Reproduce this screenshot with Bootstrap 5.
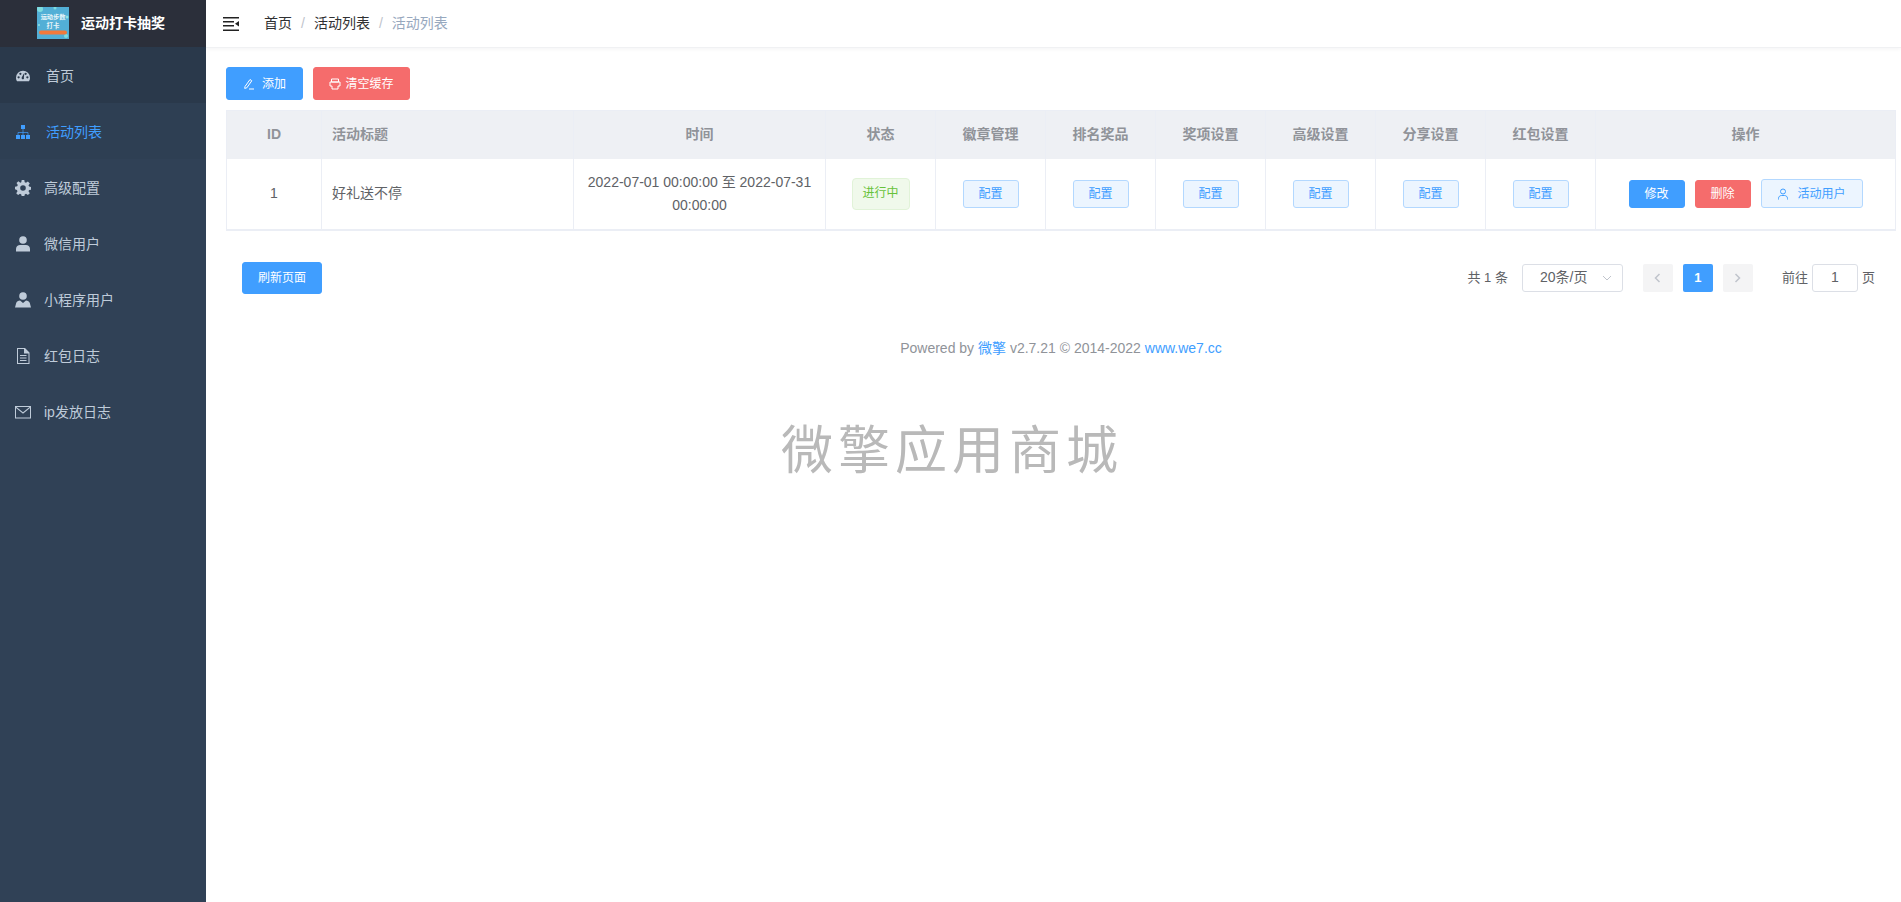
<!DOCTYPE html>
<html lang="zh">
<head>
<meta charset="utf-8">
<title>活动列表</title>
<link href="https://cdn.jsdelivr.net/npm/bootstrap@5.3.0/dist/css/bootstrap.min.css" rel="stylesheet">
<style>
html,body{height:100%}
body{font-family:"Liberation Sans","Noto Sans CJK SC",sans-serif;font-size:14px;color:#606266;background:#fff;overflow:hidden}
.shell{height:902px}
.side{width:206px;flex:none;background:#304156;color:#bfcbd9}
.brand{height:47px;background:#2b2f3a;padding-left:37px;gap:12px;color:#fff;font-weight:700;font-size:14px}
.brand svg{margin-top:-2px}
.menu-row{height:56px;padding-left:16px;padding-top:2px;color:#bfcbd9;text-decoration:none;font-size:14px}
.menu-row svg{width:14px;height:14px;flex:none;margin-right:16px;fill:currentColor}
.menu-row.wide svg{width:16px;height:16px;margin-left:-1px;margin-right:13px}
.menu-row.first{background:#2a394b}
.menu-row.second{background:#2e3f53}
.menu-row.on{color:#409eff}
.main-area{min-width:0}
.topbar{height:48px;border-bottom:1px solid #f0f1f3;box-shadow:0 1px 4px rgba(0,21,41,.05);padding-left:17px}
.crumbs{margin-left:25px;color:#303133;font-size:14px}
.crumbs .sep{color:#c0c4cc;margin:0 9px}
.crumbs .now{color:#97a8be}
.content{padding:19px 5px 0 20px}
.btn-el{font-size:12px;line-height:1;border-radius:3px;border:1px solid transparent;color:#fff;display:inline-flex;align-items:center;justify-content:center;padding:0}
.btn-blue{background:#409eff;border-color:#409eff}
.btn-red{background:#f56c6c;border-color:#f56c6c}
.btn-soft{background:#ecf5ff;border-color:#b3d8ff;color:#409eff}
.b-add{width:77px;height:33px;gap:7px}
.b-clear{width:97px;height:33px;gap:4px;margin-left:10px}
.b-cfg{width:56px;height:28px}
.b-edit{width:56px;height:28px}
.b-del{width:56px;height:28px;margin-left:10px}
.b-users{width:102px;height:29px;margin-left:10px;gap:8px}
.b-refresh{width:80px;height:32px}
.grid-table{width:1670px;margin:10px 0 0;table-layout:fixed;border-collapse:collapse;border:1px solid #ebeef5;border-bottom-width:2px}
.grid-table th{background:#eef0f4;color:#909399;height:48px;font-weight:700;font-size:14px;border:1px solid #ebeef5;border-width:0 1px;text-align:center;vertical-align:middle;padding:0 10px}
.grid-table td{height:71px;color:#606266;font-size:14px;border:1px solid #ebeef5;border-width:0 1px;text-align:center;vertical-align:middle;padding:0 10px;line-height:23px}
.grid-table .to-left{text-align:left}
.w-id{width:95px}.w-title{width:252px}.w-time{width:252px}.w-state{width:110px}.w-cfg{width:110px}
.state-tag{display:inline-flex;align-items:center;justify-content:center;width:58px;height:32px;background:#f0f9eb;border:1px solid #e1f3d8;border-radius:4px;color:#67c23a;font-size:12px}
.tools{padding:31px 21px 0 16px}
.pager{font-size:13px;color:#606266}
.pick{width:101px;height:28px;border:1px solid #dcdfe6;border-radius:3px;margin:0 20px 0 14px;padding:0 10px 0 17px;color:#606266;font-size:14px}
.page-box{width:30px;height:28px;border-radius:2px;background:#f4f4f5;color:#c0c4cc;margin-right:10px}
.page-box.cur{background:#409eff;color:#fff;font-weight:700}
.jump-in{width:46px;height:28px;border:1px solid #dcdfe6;border-radius:3px;margin:0 4px;color:#606266;font-size:14px}
.jump-label{margin-left:19px}
.foot-note{margin-top:44px;color:#909399;font-size:14px;line-height:20px}
.foot-note a{color:#409eff;text-decoration:none}
.mark-text{padding-right:218px;margin-top:61px;color:#b9b9b9;font-size:52px;letter-spacing:5px;line-height:56px;font-weight:400;font-family:"Noto Sans CJK SC",sans-serif}
.logo-words{font-family:"Noto Sans CJK SC",sans-serif;fill:#e8f6fa}
</style>
</head>
<body>
<div class="shell d-flex">
  <aside class="side d-flex flex-column">
    <div class="brand d-flex align-items-center">
      <svg width="32" height="32" viewBox="0 0 32 32"><rect width="32" height="32" fill="#52afd6"/><circle cx="3" cy="2" r="3" fill="#7fdde0"/><circle cx="18" cy="1" r="1.500" fill="#7fdde0"/><circle cx="30" cy="10" r="1.500" fill="#8fe3e3"/><circle cx="29" cy="29" r="2" fill="#7fdde0"/><circle cx="2" cy="18" r="1" fill="#8fe3e3"/><text class="logo-words" x="16" y="12" font-size="6.200" text-anchor="middle">运动步数</text><text class="logo-words" x="16" y="20.500" font-size="6.500" text-anchor="middle">打卡</text><rect x="2" y="23.500" width="28" height="4" rx="2" fill="#f2793a"/></svg>
      <span>运动打卡抽奖</span>
    </div>
    <a class="menu-row first d-flex align-items-center" href="#"><svg viewBox="0 0 16 16"><path d="M8 2a8 8 0 0 0-8 8c0 1.600.5 3 1.200 4h13.600c.7-1 1.200-2.400 1.200-4a8 8 0 0 0-8-8zM3 10.800a1.300 1.300 0 1 1 0-2.600 1.300 1.300 0 0 1 0 2.600zM5 6.800a1.300 1.300 0 1 1 0-2.600 1.300 1.300 0 0 1 0 2.600zm3.800 4.700a1.500 1.500 0 0 1-2.400-1.400L8.800 5.500l.6.2-.4 4.400c.3.400.2 1-.2 1.400zM11 6.800a1.300 1.300 0 1 1 0-2.600 1.300 1.300 0 0 1 0 2.600zm2 4a1.300 1.300 0 1 1 0-2.600 1.300 1.300 0 0 1 0 2.600z" fill-rule="evenodd"/></svg><span>首页</span></a>
    <a class="menu-row second on d-flex align-items-center" href="#"><svg viewBox="0 0 14 14"><path d="M5 0h4v4H5zM0 10h4v4H0zM5 10h4v4H5zM10 10h4v4h-4z"/><path d="M7 4v6M2 10V7.500h10V10" fill="none" stroke="currentColor" stroke-width=".7"/></svg><span>活动列表</span></a>
    <a class="menu-row wide d-flex align-items-center" href="#"><svg viewBox="0 0 16 16"><path fill-rule="evenodd" d="M6.700 0h2.600l.4 2.200 1.300.6 1.900-1.300 1.900 1.900-1.300 1.900.6 1.300 2.200.4v2.600l-2.200.4-.6 1.300 1.300 1.900-1.900 1.900-1.900-1.300-1.300.6-.4 2.200H6.700l-.4-2.200-1.300-.6-1.900 1.300-1.900-1.900 1.300-1.900-.6-1.300L0 9.300V6.700l2.200-.4.6-1.300-1.300-1.900 1.900-1.900L5.300 2.800l1-.6zM8 5.200a2.800 2.800 0 1 0 0 5.600 2.800 2.800 0 0 0 0-5.600z"/></svg><span>高级配置</span></a>
    <a class="menu-row wide d-flex align-items-center" href="#"><svg viewBox="0 0 16 16"><circle cx="8" cy="4" r="3.800"/><path d="M1 15.500v-2.500c0-2.500 2-4 4-4h6c2 0 4 1.500 4 4v2.500z"/></svg><span>微信用户</span></a>
    <a class="menu-row wide d-flex align-items-center" href="#"><svg viewBox="0 0 16 16"><circle cx="8" cy="4" r="3.800"/><path d="M0 15.500 1.200 11c.5-1.500 2-2.200 3.800-2.500L8 11l3-2.500c1.800.3 3.300 1 3.800 2.500l1.200 4.500z"/></svg><span>小程序用户</span></a>
    <a class="menu-row wide d-flex align-items-center" href="#"><svg viewBox="0 0 16 16"><path fill-rule="evenodd" d="M2 0h8l4.500 4.500V16H2zm1 1v14h10.500V5.500H9V1zm2 6h6.500v1H5zm0 2.500h6.500v1H5zM5 12h6.500v1H5z"/></svg><span>红包日志</span></a>
    <a class="menu-row wide d-flex align-items-center" href="#"><svg viewBox="0 0 16 16"><path fill-rule="evenodd" d="M0 2h16v12.500H0zm1.500 1L8 8.300 14.500 3zM1 4v9.500h14V4L8 9.700z"/></svg><span>ip发放日志</span></a>
  </aside>
  <div class="main-area flex-grow-1">
    <header class="topbar d-flex align-items-center">
      <svg width="16" height="14" viewBox="0 0 16 14"><path d="M0 0h16v1.500H0zM0 4h11v1.500H0zM0 8h11v1.500H0zM0 12.500h16V14H0zM16 4v5.500L12 6.800z" fill="#222"/></svg>
      <nav class="crumbs"><span>首页</span><span class="sep">/</span><span>活动列表</span><span class="sep">/</span><span class="now">活动列表</span></nav>
    </header>
    <section class="content">
      <div class="d-flex">
        <button class="btn-el btn-blue b-add" type="button"><svg width="12" height="12" viewBox="0 0 12 12" fill="none" stroke="#fff"><path d="M2 8.500 7 1.500l1.800 1.300-5 7-2.100.6zM6 11h5"/></svg><span>添加</span></button>
        <button class="btn-el btn-red b-clear" type="button"><svg width="12" height="12" viewBox="0 0 12 12" fill="none" stroke="#fff"><path d="M2.500 1h7v3h-7zM1 4h10v4H9v3H3V8H1z"/></svg><span>清空缓存</span></button>
      </div>
      <table class="grid-table">
        <colgroup><col class="w-id"><col class="w-title"><col class="w-time"><col class="w-state"><col class="w-cfg"><col class="w-cfg"><col class="w-cfg"><col class="w-cfg"><col class="w-cfg"><col class="w-cfg"><col></colgroup>
        <thead><tr><th>ID</th><th class="to-left">活动标题</th><th>时间</th><th>状态</th><th>徽章管理</th><th>排名奖品</th><th>奖项设置</th><th>高级设置</th><th>分享设置</th><th>红包设置</th><th>操作</th></tr></thead>
        <tbody><tr>
          <td>1</td><td class="to-left">好礼送不停</td><td>2022-07-01 00:00:00 至 2022-07-31 00:00:00</td>
          <td><span class="state-tag">进行中</span></td>
          <td><button class="btn-el btn-soft b-cfg" type="button">配置</button></td>
          <td><button class="btn-el btn-soft b-cfg" type="button">配置</button></td>
          <td><button class="btn-el btn-soft b-cfg" type="button">配置</button></td>
          <td><button class="btn-el btn-soft b-cfg" type="button">配置</button></td>
          <td><button class="btn-el btn-soft b-cfg" type="button">配置</button></td>
          <td><button class="btn-el btn-soft b-cfg" type="button">配置</button></td>
          <td><div class="d-flex justify-content-center align-items-center"><button class="btn-el btn-blue b-edit" type="button">修改</button><button class="btn-el btn-red b-del" type="button">删除</button><button class="btn-el btn-soft b-users" type="button"><svg width="12" height="12" viewBox="0 0 12 12" fill="none" stroke="#409eff"><circle cx="6" cy="3.500" r="2.500"/><path d="M1.500 11.500v-1c0-2 1.500-3 3-3h3c1.500 0 3 1 3 3v1"/></svg><span>活动用户</span></button></div></td>
        </tr></tbody>
      </table>
      <div class="tools d-flex align-items-center justify-content-between">
        <button class="btn-el btn-blue b-refresh" type="button">刷新页面</button>
        <div class="pager d-flex align-items-center">
          <span>共 1 条</span>
          <div class="pick d-flex align-items-center justify-content-between"><span>20条/页</span><svg width="10" height="6" viewBox="0 0 10 6" fill="none" stroke="#c0c4cc"><path d="m1 1 4 4 4-4"/></svg></div>
          <div class="page-box d-flex align-items-center justify-content-center"><svg width="7" height="10" viewBox="0 0 7 10" fill="none" stroke="#c0c4cc" stroke-width="1.500"><path d="M5.500 1 1.500 5l4 4"/></svg></div>
          <div class="page-box cur d-flex align-items-center justify-content-center">1</div>
          <div class="page-box d-flex align-items-center justify-content-center"><svg width="7" height="10" viewBox="0 0 7 10" fill="none" stroke="#c0c4cc" stroke-width="1.500"><path d="m1.500 1 4 4-4 4"/></svg></div>
          <span class="jump-label">前往</span>
          <div class="jump-in d-flex align-items-center justify-content-center">1</div>
          <span>页</span>
        </div>
      </div>
      <p class="foot-note text-center mb-0">Powered by <a href="#">微擎</a> v2.7.21 © 2014-2022 <a href="#">www.we7.cc</a></p>
      <div class="mark-text text-center">微擎应用商城</div>
    </section>
  </div>
</div>
<script src="https://cdn.jsdelivr.net/npm/bootstrap@5.3.0/dist/js/bootstrap.bundle.min.js"></script>
</body>
</html>
